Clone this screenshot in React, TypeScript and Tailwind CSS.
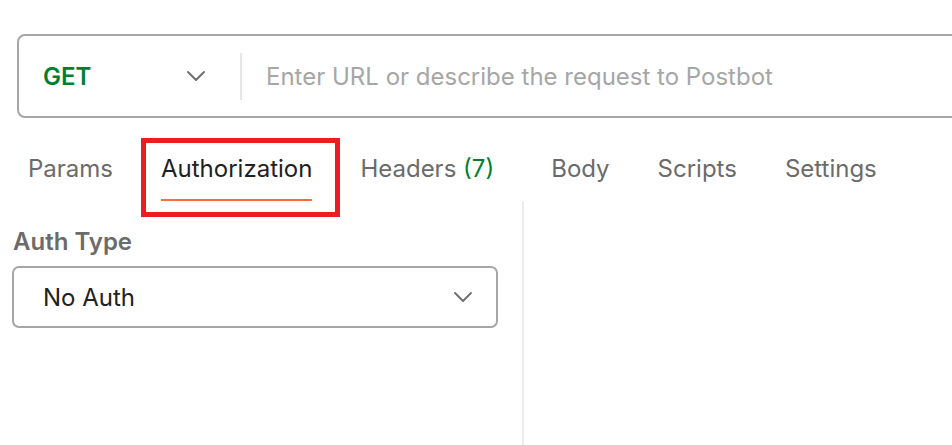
import React from "react";

function Chevron({ className }: { className?: string }) {
  return (
    <svg className={className} viewBox="0 0 18 10" fill="none">
      <path d="M1 1l8 8 8-8" stroke="#6b6b6b" strokeWidth="1.8" strokeLinecap="round" strokeLinejoin="round" />
    </svg>
  );
}

export default function App() {
  return (
    <div
      className="w-[952px] h-[445px] bg-white overflow-hidden flex flex-col"
      style={{ fontFamily: "Inter, 'Noto Sans', sans-serif" }}
    >
      <div className="pt-[34px] pl-[17px]">
        <div className="w-[960px] h-[84px] border-2 border-[#a6a6a6] rounded-[8px] flex items-center">
          <div className="flex items-center pl-[24px] w-[221px]">
            <span className="text-[24px] font-semibold text-[#007f31] leading-[29px]">GET</span>
            <Chevron className="ml-auto mr-[35px] w-[18px] h-[10px]" />
          </div>
          <div className="w-[2px] h-[47px] bg-[#e6e6e6]" />
          <span className="ml-[24px] text-[24px] text-[#a6a6a6] leading-[29px]">
            Enter URL or describe the request to Postbot
          </span>
        </div>
      </div>

      <div className="flex items-start h-[83px] pt-[36px] pl-[28px] gap-[48px] text-[24px] leading-[29px] text-[#6b6b6b]">
        <span>Params</span>
        <span className="relative text-[#212121]">
          Authorization
          <span className="absolute left-0 right-0 top-[45px] h-[2px] bg-[#ff6c37]" />
          <span className="absolute left-[-20px] right-[-28px] top-[-16px] h-[79px] border-[5px] border-[#ed1c24]" />
        </span>
        <span>
          Headers <span className="text-[#007f31]">(7)</span>
        </span>
        <span className="ml-[9px]">Body</span>
        <span>Scripts</span>
        <span>Settings</span>
      </div>

      <div className="flex flex-1">
        <div className="w-[524px] border-r-2 border-[#ededed] pl-[12px] pt-[26px]">
          <div className="text-[24px] font-semibold text-[#6b6b6b] pl-[1px] leading-[29px]">Auth Type</div>
          <div className="mt-[10px] w-[486px] h-[62px] border-2 border-[#a6a6a6] rounded-[7px] flex items-center pl-[29px] pr-[24px]">
            <span className="text-[24px] leading-[29px] text-[#212121]">No Auth</span>
            <Chevron className="ml-auto w-[18px] h-[10px]" />
          </div>
        </div>
        <div className="flex-1" />
      </div>
    </div>
  );
}
